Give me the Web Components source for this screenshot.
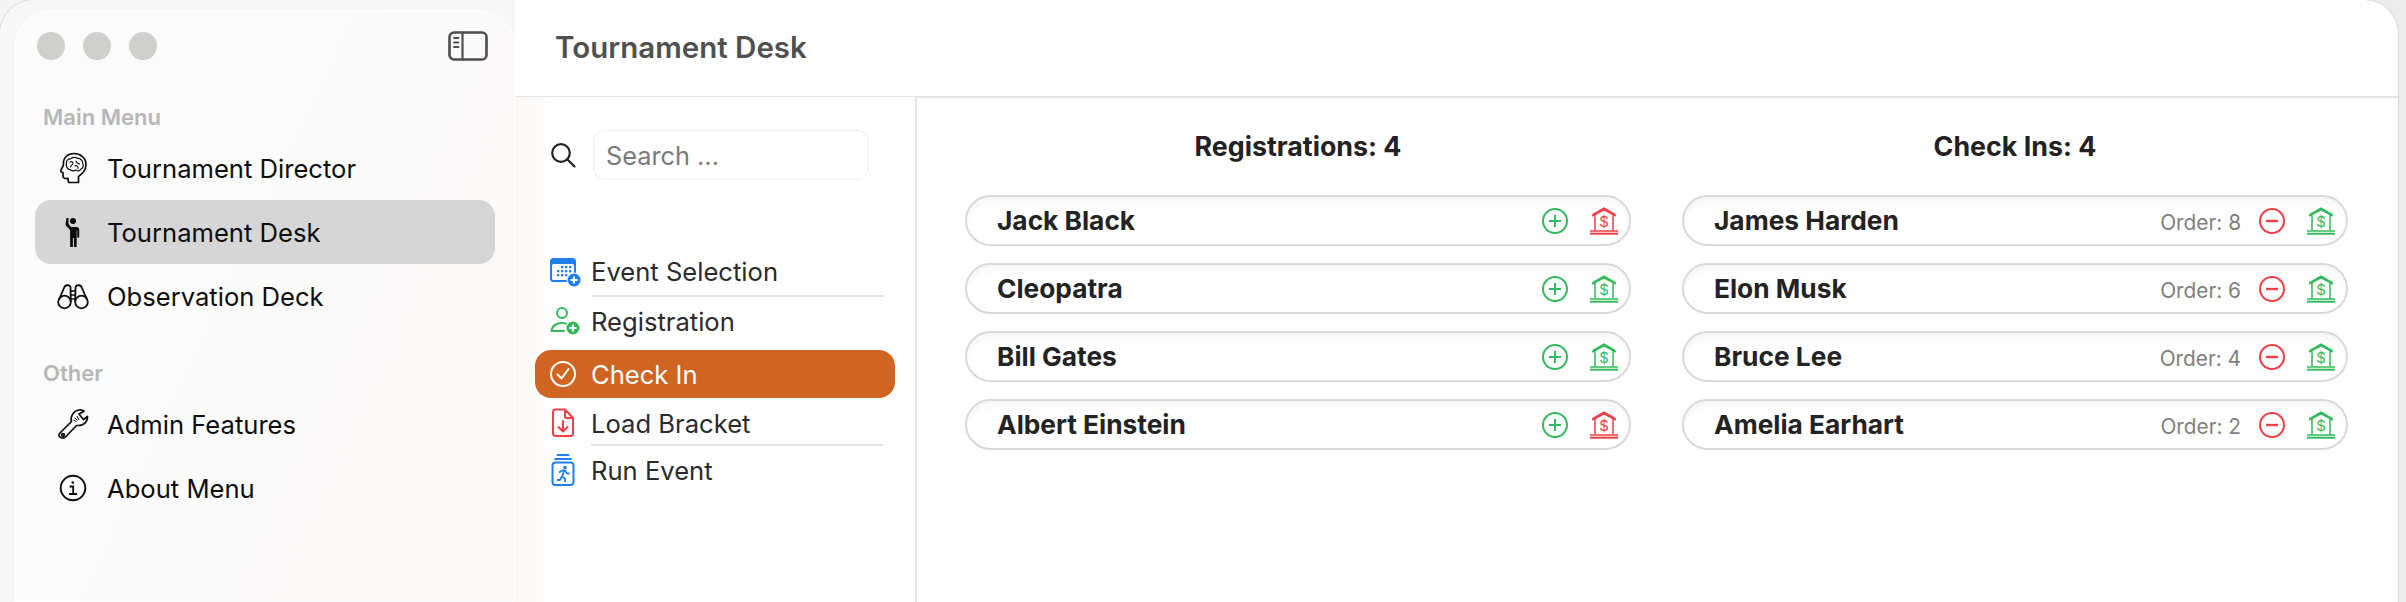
<!DOCTYPE html>
<html lang="en">
<head>
<meta charset="utf-8">
<title>Tournament Desk</title>
<style>
  html, body { margin: 0; height: 100%; overflow: hidden; }
  body { background: linear-gradient(90deg, #f4f4f4, #ececec); font-family: Inter, "Noto Sans", sans-serif; }
</style>
</head>
<body>
<desk-window>
  <side-bar slot="side">
    <side-group label="Main Menu">
      <side-item icon="brain">Tournament Director</side-item>
      <side-item icon="wave" selected>Tournament Desk</side-item>
      <side-item icon="binoculars">Observation Deck</side-item>
    </side-group>
    <side-group label="Other">
      <side-item icon="wrench">Admin Features</side-item>
      <side-item icon="info">About Menu</side-item>
    </side-group>
  </side-bar>
  <span slot="title">Tournament Desk</span>
  <step-nav slot="steps">
    <step-item icon="calendar" class="first" divider>Event Selection</step-item>
    <step-item icon="person">Registration</step-item>
    <step-item icon="check" active>Check In</step-item>
    <step-item icon="doc" class="load" divider>Load Bracket</step-item>
    <step-item icon="run">Run Event</step-item>
  </step-nav>
  <player-list heading="Registrations: 4">
    <player-row action="plus" bank="red">Jack Black</player-row>
    <player-row action="plus" bank="green">Cleopatra</player-row>
    <player-row action="plus" bank="green">Bill Gates</player-row>
    <player-row action="plus" bank="red">Albert Einstein</player-row>
  </player-list>
  <player-list heading="Check Ins: 4">
    <player-row action="minus" bank="green" order="8">James Harden</player-row>
    <player-row action="minus" bank="green" order="6">Elon Musk</player-row>
    <player-row action="minus" bank="green" order="4">Bruce Lee</player-row>
    <player-row action="minus" bank="green" order="2">Amelia Earhart</player-row>
  </player-list>
</desk-window>

<script>
const BLUE = "#1f7fee", GREEN = "#34b95c", RED = "#f43e46";

// every icon sits in a 32x32 box, stroke colour comes from currentColor
const ICONS = {
  brain: `<g fill="none" stroke="currentColor" stroke-width="1.7" stroke-linejoin="round" stroke-linecap="round">
    <path d="M17 1.500C10.500 1.500 6 6 6.500 12C6.500 14.500 4 17 3.700 18.800C3.500 19.800 5 20.300 6 20.800L6 24.500C6 26.300 8.500 26.800 11 26.400L11.500 30.500L21.500 30.500L21.500 24.500C26 21.500 29 17.500 29 12.500C29 6 23.500 1.500 17 1.500Z"/>
    <path stroke-width="1.200" d="M9.500 11.500C9 8.500 11.500 6.500 13.500 7C15 5 19 5 20.500 6.500C23 6 26 8.500 25.800 11.500C27 13.500 26 16.500 24 17C23 19 20 19.500 19 18C17 19.500 14 19 13.500 17.500C11 18 8.500 14.500 9.500 11.500Z"/>
    <path stroke-width="1.100" d="M13 10C14.500 9 16 10 16 11.500C16 13 13.500 13 13.500 15M19 9C19 11.500 21 11 22.500 12M18 14C19.500 13 21.500 14.500 21 16.500"/>
  </g>`,
  wave: `<circle cx="16" cy="5" r="3" fill="currentColor"/>
    <path fill="currentColor" d="M9.500 2h2v6l2.500 3h5.500c1.700 0 2.700 1 2.700 2.500v8h-2v-7h-.5V31h-2.800V22h-1v9h-2.800V14l-3.800-4c-.5-.5-.8-1.200-.8-2z"/>`,
  binoculars: `<g fill="none" stroke="currentColor" stroke-width="1.800" stroke-linejoin="round">
    <circle cx="7.500" cy="22" r="6.300"/><circle cx="24.500" cy="22" r="6.300"/>
    <path d="M1.800 20L7 8C8 4.500 12.500 4.500 13.500 7L13.800 22M30.200 20L25 8C24 4.500 19.500 4.500 18.500 7L18.200 22"/>
    <path stroke-width="1.300" d="M13.500 11h5M13.500 15h5M13.500 19h5"/>
  </g>`,
  wrench: `<g fill="none" stroke="currentColor" stroke-width="1.700" stroke-linejoin="round">
    <path d="M2.500 25.500L14.500 13.500C13 8 17 2.500 22 2C24 1.800 26 2.200 27 3.200L22 6L26.500 11.500L30.500 8.500C31 13 27.500 17.500 21.500 17.500L19.500 17.500L8.500 29C6.500 31.500 0 29 2.500 25.500Z"/>
    <circle cx="6" cy="27" r="1.300"/>
    <path stroke-width="1" d="M17.500 9.500l3 3M20 8l2 4M16.500 12l3 1.500"/>
  </g>`,
  info: `<g fill="none" stroke="currentColor" stroke-linecap="square">
    <circle cx="16" cy="16" r="12.300" stroke-width="1.900"/>
    <path stroke-width="1.800" d="M13.500 14.500h2.700v7M13 22h6.200"/>
    <circle cx="15.800" cy="10.600" r="1.300" fill="currentColor" stroke="none"/>
  </g>`,
  calendar: `<rect x="3" y="3" width="26" height="24" rx="3.500" fill="${BLUE}"/>
    <rect x="5" y="9" width="22" height="16" rx="1.500" fill="#fff"/>
    <g fill="${BLUE}">
      <rect x="14" y="11" width="2.300" height="2.300"/><rect x="18" y="11" width="2.300" height="2.300"/><rect x="22" y="11" width="2.300" height="2.300"/>
      <rect x="10" y="15" width="2.300" height="2.300"/><rect x="14" y="15" width="2.300" height="2.300"/><rect x="18" y="15" width="2.300" height="2.300"/><rect x="22" y="15" width="2.300" height="2.300"/>
      <rect x="10" y="19" width="2.300" height="2.300"/><rect x="14" y="19" width="2.300" height="2.300"/><rect x="18" y="19" width="2.300" height="2.300"/>
    </g>
    <circle cx="27" cy="25" r="7.500" fill="#fff"/><circle cx="27" cy="25" r="6.500" fill="${BLUE}"/>
    <path d="M27 21.500v7M23.500 25h7" stroke="#fff" stroke-width="2"/>`,
  person: `<g fill="none" stroke="${GREEN}" stroke-width="2" stroke-linecap="round">
      <circle cx="15" cy="8" r="5"/>
      <path d="M4.500 26C5 20.500 10 18 15 18C17.500 18 19.500 18.500 21 19.500M4.500 26H17"/>
    </g>
    <circle cx="26" cy="23" r="7.500" fill="#fff"/><circle cx="26" cy="23" r="6.500" fill="${GREEN}"/>
    <path d="M26 19.500v7M22.500 23h7" stroke="#fff" stroke-width="2"/>`,
  check: `<g fill="none" stroke="#fff" stroke-linecap="round" stroke-linejoin="round">
      <circle cx="16" cy="16" r="12" stroke-width="2"/>
      <path d="M10.500 16.500L14.500 20.500L21.500 11" stroke-width="2"/>
    </g>`,
  doc: `<g fill="none" stroke="${RED}" stroke-width="2" stroke-linejoin="round" stroke-linecap="round">
      <path d="M8.500 2.500H18L26 11V26C26 28 25 29 23.500 29H8.500C7 29 6 28 6 26V5.500C6 3.500 7 2.500 8.500 2.500Z"/>
      <path d="M18 3V9.500C18 10.500 18.500 11 19.500 11H25.500M16 14V24M11.500 20L16 24.500L20.500 20"/>
    </g>`,
  run: `<g fill="none" stroke="${BLUE}" stroke-width="2" stroke-linecap="round">
      <path d="M10.500 1H21.500M8 5H24" stroke-width="1.800"/>
      <rect x="5.500" y="8.500" width="21" height="22.500" rx="3"/>
    </g>
    <circle cx="18" cy="13.500" r="1.800" fill="${BLUE}"/>
    <path d="M12 18.500L15 16.500H18L20 19.500H22.500M17 17.500L15 22.500L18 24.500V28M14.500 23L13 26H10" fill="none" stroke="${BLUE}" stroke-width="1.800" stroke-linejoin="round"/>`,
  search: `<g fill="none" stroke="#222" stroke-width="2.200" stroke-linecap="round">
      <circle cx="14" cy="14" r="8.800"/><path d="M20.500 20.500L27.500 27.500"/>
    </g>`,
  sidebar: `<g fill="none" stroke="#4e4e4e" stroke-linecap="round">
      <rect x="1.500" y="1.500" width="37" height="27" rx="4.500" stroke-width="2.600"/>
      <path d="M14.500 1.500V28.500" stroke-width="2.200"/>
      <path d="M6 7h4.500M6 11.500h4.500M6 16h4.500" stroke-width="1.800"/>
    </g>`,
  plus: `<circle cx="16" cy="16" r="12" fill="none" stroke="${GREEN}" stroke-width="2"/>
    <path d="M16 10v12M10 16h12" stroke="${GREEN}" stroke-width="2"/>`,
  minus: `<circle cx="16" cy="16" r="12" fill="none" stroke="${RED}" stroke-width="2"/>
    <path d="M10 16h12" stroke="${RED}" stroke-width="2.400"/>`,
};

customElements.define("app-icon", class AppIcon extends HTMLElement {
  connectedCallback() {
    const name = this.getAttribute("name");
    const w = this.getAttribute("w") || 32;
    const h = this.getAttribute("h") || 32;
    const root = this.attachShadow({ mode: "open" });
    root.innerHTML = `<style>:host{display:block;line-height:0;flex:none}svg{overflow:visible}</style>
      <svg width="${w}" height="${h}" viewBox="0 0 ${w} ${h}">${ICONS[name]}</svg>`;
  }
});

customElements.define("bank-icon", class BankIcon extends HTMLElement {
  connectedCallback() {
    const c = this.getAttribute("color") === "red" ? RED : GREEN;
    const root = this.attachShadow({ mode: "open" });
    root.innerHTML = `<style>:host{display:block;line-height:0;flex:none}
      text{font:400 15px Inter,sans-serif}</style>
      <svg width="30" height="28" viewBox="0 0 30 28">
        <path d="M4 9V7.500L15 1.200L26 7.500V9M3 9.200L15 2.800L27 9.200M6 8V23.500M24 8V23.500" fill="none" stroke="${c}" stroke-width="1.500"/>
        <path d="M1 24h28" stroke="${c}" stroke-width="1.500"/>
        <path d="M1 26.700h28" stroke="${c}" stroke-width="2"/>
        <text x="15" y="20" text-anchor="middle" fill="${c}">$</text>
      </svg>`;
  }
});

const winTpl = document.createElement("template");
winTpl.innerHTML = `
  <style>
    :host {
      display: flex;
      width: 2398px;
      height: 602px;
      overflow: hidden;
      box-sizing: border-box;
      background: #fff;
      border-radius: 34px 34px 0 0;
      box-shadow: 0 0 0 1px #dcdcdc;
    }
    .left {
      flex: none;
      padding: 10px 0 0 15px;
      background: #f7f7f7;
      border-top-left-radius: 34px;
    }
    .main { flex: 1; display: flex; flex-direction: column; min-width: 0; }
    .head {
      height: 93px;
      flex: none;
      display: flex;
      align-items: center;
      padding: 0 0 3px 40px;
      border-bottom: 2px solid #e4e4e4;
      font: 600 29.500px Inter, sans-serif;
      color: #505050;
      margin-bottom: -1px;
    }
    .body { flex: 1; display: flex; min-height: 0; }
    .lists {
      flex: 1;
      display: grid;
      grid-template-columns: 1fr 1fr;
      column-gap: 51px;
      padding: 0 50px 0 48px;
      align-content: start;
    }
  </style>
  <div class="left"><slot name="side"></slot></div>
  <div class="main">
    <div class="head"><slot name="title"></slot></div>
    <div class="body">
      <slot name="steps"></slot>
      <div class="lists"><slot></slot></div>
    </div>
  </div>`;
customElements.define("desk-window", class DeskWindow extends HTMLElement {
  constructor() {
    super();
    this.attachShadow({ mode: "open" }).appendChild(winTpl.content.cloneNode(true));
  }
});

const sideTpl = document.createElement("template");
sideTpl.innerHTML = `
  <style>
    :host {
      display: block;
      width: 500px;
      height: 592px;
      box-sizing: border-box;
      background: linear-gradient(115deg, #fbfbfb 40%, #fbf8f6);
      border: 1px solid #fff;
      border-radius: 36px 36px 0 0;
      padding: 0 19px;
    }
    .lights { display: flex; align-items: center; height: 70px; padding: 0 8px 0 2px; gap: 18px; }
    .lights i { width: 28px; height: 28px; border-radius: 50%; background: #cfcfcd; }
    .lights app-icon { margin-left: auto; margin-right: -1px; }
    .groups { display: flex; flex-direction: column; gap: 32px; padding-top: 23px; }
  </style>
  <div class="lights"><i></i><i></i><i></i><app-icon name="sidebar" w="40" h="30"></app-icon></div>
  <div class="groups"><slot></slot></div>`;
customElements.define("side-bar", class SideBar extends HTMLElement {
  constructor() {
    super();
    this.attachShadow({ mode: "open" }).appendChild(sideTpl.content.cloneNode(true));
  }
});

customElements.define("side-group", class SideGroup extends HTMLElement {
  connectedCallback() {
    const root = this.attachShadow({ mode: "open" });
    root.innerHTML = `<style>
      :host { display: block; }
      .label { font: 600 22px/26px Inter, sans-serif; color: #b6b6b6; padding-left: 8px; height: 26px; margin-bottom: 6px; }
    </style>
    <div class="label">${this.getAttribute("label")}</div><slot></slot>`;
  }
});

customElements.define("side-item", class SideItem extends HTMLElement {
  connectedCallback() {
    const root = this.attachShadow({ mode: "open" });
    root.innerHTML = `<style>
      :host { display: flex; align-items: center; height: 64px; gap: 18px; padding-left: 22px; border-radius: 16px;
        font: 400 25.600px Inter, sans-serif; color: #0d0d0d; }
      :host([selected]) { background: #d6d6d6; }
    </style>
    <app-icon name="${this.getAttribute("icon")}"></app-icon><span><slot></slot></span>`;
  }
});

customElements.define("step-nav", class StepNav extends HTMLElement {
  constructor() {
    super();
    const root = this.attachShadow({ mode: "open" });
    root.innerHTML = `<style>
      :host { display: block; flex: none; width: 400px; height: 100%; box-sizing: content-box;
        border-right: 2px solid #e4e4e4;
        background: linear-gradient(90deg, #fbf8f6, #fff 46px); }
      .search { display: flex; align-items: center; gap: 14px; padding: 33px 46px 0 32px; }
      .box { flex: 1; height: 50px; box-sizing: border-box; border: 1px solid #efefef; border-radius: 12px;
        display: flex; align-items: center; padding-left: 12px;
        font: 400 25.300px Inter, sans-serif; color: #7a7a7a; background: #fff; }
      .list { display: flex; flex-direction: column; padding: 67px 20px 0; }
    </style>
    <div class="search"><app-icon name="search"></app-icon><div class="box">Search ...</div></div>
    <div class="list"><slot></slot></div>`;
  }
});

customElements.define("step-item", class StepItem extends HTMLElement {
  connectedCallback() {
    const root = this.attachShadow({ mode: "open" });
    root.innerHTML = `<style>
      :host { display: block; font: 400 25.600px Inter, sans-serif; color: #2b2b2b; margin-top: 0; }
      .row { display: flex; align-items: center; gap: 12px; height: 48px; padding-left: 12px; border-radius: 16px; }
      :host([active]) { margin-top: 5px; }
      :host([active]) .row { background: #d06423; color: #fff; }
      .line { display: none; height: 2px; background: #e4e4e4; margin: 0 12px 0 56px; }
      :host([divider]) .line { display: block; }
      :host(.load) { margin-top: 1px; }
      :host(.load) .row { margin-bottom: -3px; }
      :host(.load) .line { margin-bottom: 0; }
    </style>
    <div class="row"><app-icon name="${this.getAttribute("icon")}"></app-icon><span><slot></slot></span></div>
    <div class="line"></div>`;
  }
});

customElements.define("player-list", class PlayerList extends HTMLElement {
  connectedCallback() {
    const root = this.attachShadow({ mode: "open" });
    root.innerHTML = `<style>
      :host { display: block; }
      h2 { margin: 0; height: 98px; display: flex; align-items: center; justify-content: center;
        font: 700 26.800px Inter, sans-serif; color: #222; }
      .rows { display: flex; flex-direction: column; gap: 17px; }
    </style>
    <h2>${this.getAttribute("heading")}</h2><div class="rows"><slot></slot></div>`;
  }
});

customElements.define("player-row", class PlayerRow extends HTMLElement {
  connectedCallback() {
    const order = this.getAttribute("order");
    const root = this.attachShadow({ mode: "open" });
    root.innerHTML = `<style>
      :host { display: flex; align-items: center; height: 51px; box-sizing: border-box;
        border: 2px solid #d9d9d9; border-radius: 25.500px; padding: 0 10px 0 30px;
        box-shadow: inset 0 7px 8px -3px #f4f4f4; background: #fff; }
      .name { flex: 1; font: 700 26.300px Inter, sans-serif; color: #232323; }
      .order { font: 400 20.800px Inter, sans-serif; color: #7f7f7f; margin: 3px 15px 0 0; }
      .bank { margin-left: 18px; }
    </style>
    <span class="name"><slot></slot></span>
    ${order ? `<span class="order">Order: ${order}</span>` : ""}
    <app-icon name="${this.getAttribute("action")}"></app-icon>
    <bank-icon class="bank" color="${this.getAttribute("bank")}"></bank-icon>`;
  }
});
</script>
</body>
</html>
